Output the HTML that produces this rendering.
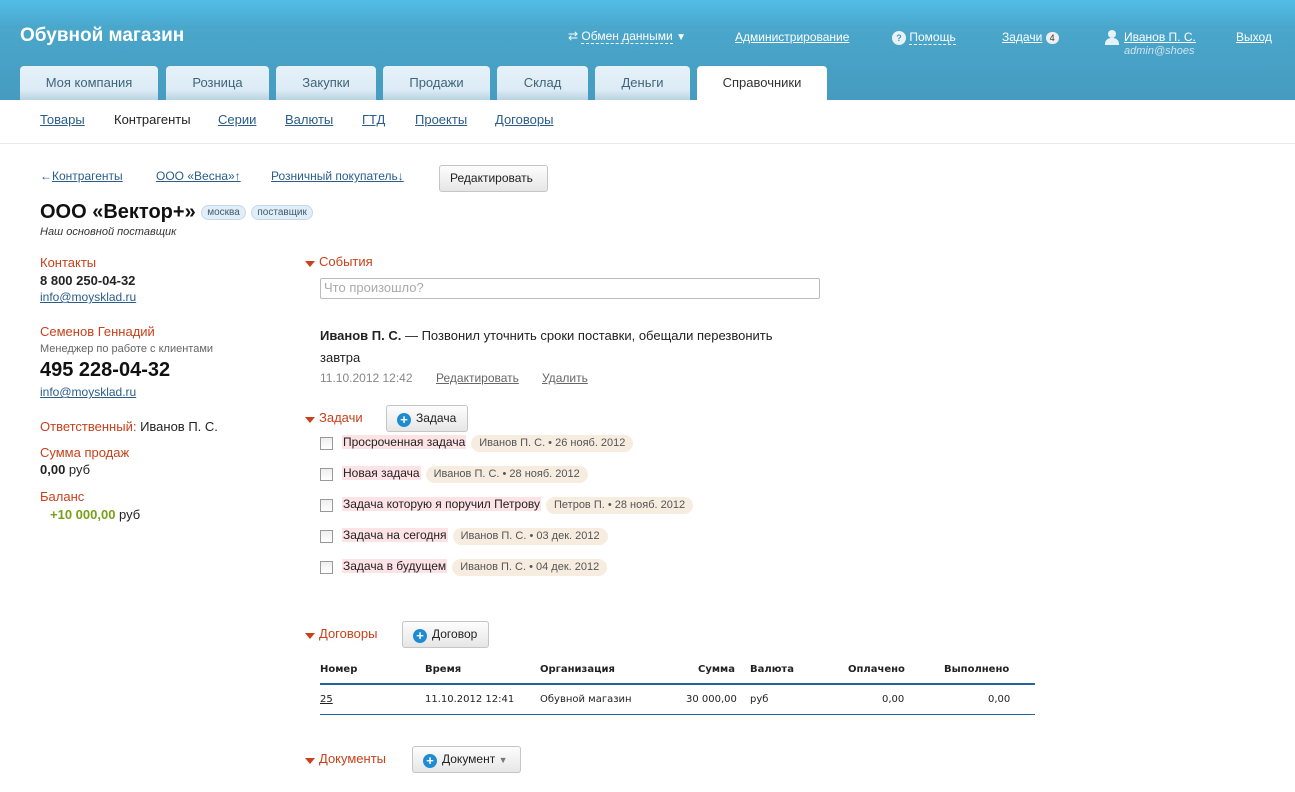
<!DOCTYPE html>
<html><head><meta charset="utf-8"><style>
*{margin:0;padding:0;box-sizing:border-box}
body{width:1295px;height:792px;overflow:hidden;background:#fff;font-family:"Liberation Sans",Arial,sans-serif;font-size:13px;color:#222;position:relative}
.a{position:absolute;white-space:nowrap}
#hd{position:absolute;left:0;top:0;width:1295px;height:100px;background:linear-gradient(#52bde6 0,#4aa6cb 28px,#459cc0 100px)}
.w{color:#fff}
.u{text-decoration:underline}
.dash{border-bottom:1px dashed #fff}
.tab{position:absolute;top:66px;height:34px;border-radius:4px 4px 0 0;background:linear-gradient(#e6f2fa 0,#dcebf5 70%,#b9d3e1 100%);color:#3f6478;font-size:13px;text-align:center;line-height:34px}
.tab.on{background:#fff;color:#333}
.sub{top:112px;font-size:13px;color:#2a5d8a;text-decoration:underline}
.lk{color:#2a5d8a;text-decoration:underline}
.red{color:#c9401b}
.btn{position:absolute;height:27px;border:1px solid #c5c5c5;border-radius:3px;background:linear-gradient(#fdfdfd,#e6e6e6);font-size:12px;color:#222;line-height:25px;padding:0 10px}
.plus{display:inline-block;width:14px;height:14px;border-radius:7px;background:#1f8bd3;color:#fff;font-weight:bold;font-size:13px;line-height:14px;text-align:center;vertical-align:-2px;margin-right:5px}
.tri{position:absolute;width:0;height:0;border-left:5px solid transparent;border-right:5px solid transparent;border-top:6px solid #c9401b}
.chk{position:absolute;left:320px;width:13px;height:13px;border:1px solid #999;background:linear-gradient(#eee,#fff)}
.tk{background:#fde3e6;padding:0 1px}
.tg{display:inline-block;background:#f6ede0;border-radius:9px;padding:0 8px;font-size:11px;color:#555;line-height:17px;margin-left:5px}
.pill{display:inline-block;background:#e2eef7;border:1px solid #c3d9ea;border-radius:8px;font-size:10px;font-weight:normal;color:#3d5a70;padding:0 5px;line-height:13px;vertical-align:3px}
.th{font-family:"DejaVu Sans",sans-serif;font-size:10px;font-weight:bold;top:664px;color:#222}
.td{font-family:"DejaVu Sans",sans-serif;font-size:10px;top:694px;color:#222}
</style></head><body>
<div id="hd"></div>
<div class="a w" style="left:20px;top:25px;font-size:19px;font-weight:bold">Обувной магазин</div>
<div class="a w" style="left:568px;top:29px;font-size:12px">⇄ <span class="dash">Обмен данными</span> <span style="font-size:10px">▼</span></div>
<div class="a w u" style="left:735px;top:30px;font-size:12px">Администрирование</div>
<div class="a w" style="left:892px;top:30px;font-size:12px"><span style="display:inline-block;width:14px;height:14px;border-radius:7px;background:#e8f1f6;color:#4598bd;font-size:9px;text-align:center;line-height:14px;font-weight:bold">?</span> <span class="dash">Помощь</span></div>
<div class="a w" style="left:1002px;top:30px;font-size:12px"><span class="u">Задачи</span> <span style="display:inline-block;background:#eee;color:#333;border-radius:7px;font-size:9px;padding:0 4px;line-height:12px">4</span></div>
<div class="a" style="left:1105px;top:30px;width:14px;height:15px"><div style="position:absolute;left:3px;top:0;width:8px;height:8px;border-radius:4px;background:#e8f1f6"></div><div style="position:absolute;left:0;top:8px;width:14px;height:7px;border-radius:6px 6px 0 0;background:#e8f1f6"></div></div>
<div class="a w u" style="left:1124px;top:30px;font-size:12px">Иванов П. С.</div>
<div class="a" style="left:1124px;top:45px;font-size:11px;font-style:italic;color:#cfe3ee">admin@shoes</div>
<div class="a w u" style="left:1236px;top:30px;font-size:12px">Выход</div>
<div class="tab" style="left:20px;width:138px">Моя компания</div>
<div class="tab" style="left:166px;width:103px">Розница</div>
<div class="tab" style="left:276px;width:100px">Закупки</div>
<div class="tab" style="left:383px;width:107px">Продажи</div>
<div class="tab" style="left:497px;width:91px">Склад</div>
<div class="tab" style="left:595px;width:95px">Деньги</div>
<div class="tab on" style="left:697px;width:130px">Справочники</div>
<div class="a sub" style="left:40px">Товары</div>
<div class="a sub" style="left:114px;color:#222;text-decoration:none">Контрагенты</div>
<div class="a sub" style="left:218px">Серии</div>
<div class="a sub" style="left:285px">Валюты</div>
<div class="a sub" style="left:362px">ГТД</div>
<div class="a sub" style="left:415px">Проекты</div>
<div class="a sub" style="left:495px">Договоры</div>
<div class="a" style="left:0;top:143px;width:1295px;height:1px;background:#e8e8e8"></div>
<div class="a" style="left:40px;top:169px;font-size:12px;color:#2a5d8a">←<span class="u">Контрагенты</span></div>
<div class="a lk" style="left:156px;top:169px;font-size:12px">ООО «Весна»↑</div>
<div class="a lk" style="left:271px;top:169px;font-size:12px">Розничный покупатель↓</div>
<div class="btn" style="left:439px;top:165px;width:109px">Редактировать</div>
<div class="a" style="left:40px;top:201px;font-size:20px;font-weight:bold;color:#111">ООО «Вектор+» <span class="pill">москва</span> <span class="pill">поставщик</span></div>
<div class="a" style="left:40px;top:226px;font-size:11px;font-style:italic;color:#333">Наш основной поставщик</div>
<div class="a red" style="left:40px;top:255px;font-size:13px">Контакты</div>
<div class="a" style="left:40px;top:273px;font-size:13px;font-weight:bold">8 800 250-04-32</div>
<div class="a lk" style="left:40px;top:290px;font-size:12px">info@moysklad.ru</div>
<div class="a red" style="left:40px;top:324px;font-size:13px">Семенов Геннадий</div>
<div class="a" style="left:40px;top:343px;font-size:11px;color:#666">Менеджер по работе с клиентами</div>
<div class="a" style="left:40px;top:359px;font-size:20px;font-weight:bold;color:#111">495 228-04-32</div>
<div class="a lk" style="left:40px;top:385px;font-size:12px">info@moysklad.ru</div>
<div class="a" style="left:40px;top:419px;font-size:13px"><span class="red">Ответственный:</span> Иванов П. С.</div>
<div class="a red" style="left:40px;top:445px;font-size:13px">Сумма продаж</div>
<div class="a" style="left:40px;top:462px;font-size:13px"><b>0,00</b> руб</div>
<div class="a red" style="left:40px;top:489px;font-size:13px">Баланс</div>
<div class="a" style="left:50px;top:507px;font-size:13px"><b style="color:#78a019">+10 000,00</b> руб</div>

<div class="tri" style="left:305px;top:261px"></div>
<div class="a red" style="left:319px;top:254px;font-size:13px">События</div>
<div class="a" style="left:320px;top:278px;width:500px;height:21px;border:1px solid #bbb;border-radius:2px;font-size:13px;color:#aaa;padding:1px 3px">Что произошло?</div>
<div class="a" style="left:320px;top:325px;font-size:13px;line-height:22px;white-space:normal;width:480px"><b>Иванов П. С.</b> — Позвонил уточнить сроки поставки, обещали перезвонить завтра</div>
<div class="a" style="left:320px;top:371px;font-size:12px;color:#888">11.10.2012 12:42</div>
<div class="a u" style="left:436px;top:371px;font-size:12px;color:#666">Редактировать</div>
<div class="a u" style="left:542px;top:371px;font-size:12px;color:#666">Удалить</div>

<div class="tri" style="left:305px;top:417px"></div>
<div class="a red" style="left:319px;top:410px;font-size:13px">Задачи</div>
<div class="btn" style="left:386px;top:405px;width:82px"><span class="plus">+</span>Задача</div>
<div class="chk" style="top:437px"></div><div class="a" style="left:342px;top:435px;font-size:12px"><span class="tk">Просроченная задача</span><span class="tg">Иванов П. С. • 26 нояб. 2012</span></div>
<div class="chk" style="top:468px"></div><div class="a" style="left:342px;top:466px;font-size:12px"><span class="tk">Новая задача</span><span class="tg">Иванов П. С. • 28 нояб. 2012</span></div>
<div class="chk" style="top:499px"></div><div class="a" style="left:342px;top:497px;font-size:12px"><span class="tk">Задача которую я поручил Петрову</span><span class="tg">Петров П. • 28 нояб. 2012</span></div>
<div class="chk" style="top:530px"></div><div class="a" style="left:342px;top:528px;font-size:12px"><span class="tk">Задача на сегодня</span><span class="tg">Иванов П. С. • 03 дек. 2012</span></div>
<div class="chk" style="top:561px"></div><div class="a" style="left:342px;top:559px;font-size:12px"><span class="tk">Задача в будущем</span><span class="tg">Иванов П. С. • 04 дек. 2012</span></div>

<div class="tri" style="left:305px;top:633px"></div>
<div class="a red" style="left:319px;top:626px;font-size:13px">Договоры</div>
<div class="btn" style="left:402px;top:621px;width:87px"><span class="plus">+</span>Договор</div>
<div class="a th" style="left:320px">Номер</div>
<div class="a th" style="left:425px">Время</div>
<div class="a th" style="left:540px">Организация</div>
<div class="a th" style="left:698px">Сумма</div>
<div class="a th" style="left:750px">Валюта</div>
<div class="a th" style="left:848px">Оплачено</div>
<div class="a th" style="left:944px">Выполнено</div>
<div class="a" style="left:320px;top:683px;width:715px;height:2px;background:#22639a"></div>
<div class="a td lk" style="left:320px">25</div>
<div class="a td" style="left:425px">11.10.2012 12:41</div>
<div class="a td" style="left:540px">Обувной магазин</div>
<div class="a td" style="left:686px">30 000,00</div>
<div class="a td" style="left:750px">руб</div>
<div class="a td" style="left:882px">0,00</div>
<div class="a td" style="left:988px">0,00</div>
<div class="a" style="left:320px;top:714px;width:715px;height:1px;background:#22639a"></div>

<div class="tri" style="left:305px;top:758px"></div>
<div class="a red" style="left:319px;top:751px;font-size:13px">Документы</div>
<div class="btn" style="left:412px;top:746px;width:109px"><span class="plus">+</span>Документ <span style="color:#777;font-size:9px">▼</span></div>
</body></html>
